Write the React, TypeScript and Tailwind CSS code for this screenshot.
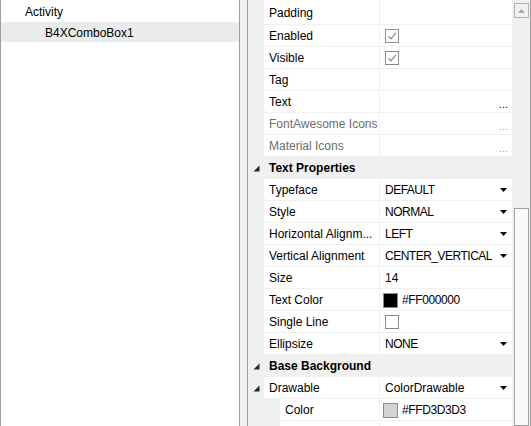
import React from "react";

type Row = {
  name: string;
  cat?: boolean;
  expander?: boolean;
  indent?: boolean;
  disabled?: boolean;
  value?: string;
  control?: "check" | "uncheck" | "dots" | "drop" | "color";
  swatch?: string;
  caps?: boolean;
  first?: boolean;
};

const rows: Row[] = [
  { name: "Padding", first: true },
  { name: "Enabled", control: "check" },
  { name: "Visible", control: "check" },
  { name: "Tag" },
  { name: "Text", control: "dots" },
  { name: "FontAwesome Icons", control: "dots", disabled: true },
  { name: "Material Icons", control: "dots", disabled: true },
  { name: "Text Properties", cat: true },
  { name: "Typeface", value: "DEFAULT", control: "drop", caps: true },
  { name: "Style", value: "NORMAL", control: "drop", caps: true },
  { name: "Horizontal Alignm...", value: "LEFT", control: "drop", caps: true },
  { name: "Vertical Alignment", value: "CENTER_VERTICAL", control: "drop", caps: true },
  { name: "Size", value: "14" },
  { name: "Text Color", value: "#FF000000", control: "color", swatch: "bg-black" },
  { name: "Single Line", control: "uncheck" },
  { name: "Ellipsize", value: "NONE", control: "drop", caps: true },
  { name: "Base Background", cat: true },
  { name: "Drawable", value: "ColorDrawable", control: "drop", expander: true },
  { name: "Color", value: "#FFD3D3D3", control: "color", swatch: "bg-[#d3d3d3]", indent: true },
  { name: "", indent: true },
];

function Expander() {
  return (
    <svg width="7" height="7" viewBox="0 0 7 7" className="ml-[5px]">
      <polygon points="6.5,0.5 6.5,6.5 0.5,6.5" fill="#262626" />
    </svg>
  );
}

function DropArrow() {
  return (
    <svg width="7" height="4" viewBox="0 0 7 4">
      <polygon points="0,0 7,0 3.5,4" fill="#000" />
    </svg>
  );
}

function CheckBox({ checked }: { checked: boolean }) {
  return (
    <div className="w-[14px] h-[14px] border border-[#8c8c8c] bg-white flex items-center justify-center">
      {checked && (
        <svg width="10" height="10" viewBox="0 0 10 10">
          <path d="M1.5 5.2 L4 7.8 L8.8 1.8" stroke="#8c8c8c" strokeWidth="1.3" fill="none" />
        </svg>
      )}
    </div>
  );
}

function PropRow({ r }: { r: Row }) {
  const h = r.first ? "h-[25px]" : "h-[22px]";
  if (r.cat) {
    return (
      <div className={`flex items-center ${h} bg-[#f0f0f0] border-b border-[#f0f0f0] pt-[1px]`}>
        <div className="w-[16px] flex items-center">
          <Expander />
        </div>
        <span className="pl-[5px] font-bold">{r.name}</span>
      </div>
    );
  }
  return (
    <div className={`flex ${h} border-b border-[#f0f0f0]`}>
      <div className={`${r.indent ? "w-[32px]" : "w-[16px]"} bg-[#f0f0f0] flex items-center shrink-0 pt-[1px]`}>
        {r.expander && <Expander />}
      </div>
      <div
        className={`${r.indent ? "w-[100px]" : "w-[116px]"} shrink-0 bg-white border-r border-[#f0f0f0] flex items-center pl-[5px] pt-[1px] whitespace-nowrap overflow-hidden ${
          r.disabled ? "text-[#6d6d6d]" : "text-black"
        }`}
      >
        {r.name}
      </div>
      <div className="w-[132px] shrink-0 bg-white flex items-center justify-between pr-[5px] pt-[1px]">
        <div className="flex items-center">
          {r.control === "color" ? (
            <>
              <div className={`ml-[3px] w-[15px] h-[15px] border border-[#8c8c8c] ${r.swatch}`} />
              <span className="ml-[4px] tracking-[-0.4px]">{r.value}</span>
            </>
          ) : r.control === "check" ? (
            <div className="ml-[5px]">
              <CheckBox checked />
            </div>
          ) : r.control === "uncheck" ? (
            <div className="ml-[5px]">
              <CheckBox checked={false} />
            </div>
          ) : (
            <span className={`ml-[5px] ${r.caps ? "tracking-[-0.5px]" : ""}`}>{r.value}</span>
          )}
        </div>
        {r.control === "drop" && <DropArrow />}
        {r.control === "dots" && (
          <span className={`text-[11px] leading-none pt-[4px] mr-[-1px] ${r.disabled ? "text-[#a8a8a8]" : "text-black"}`}>
            ...
          </span>
        )}
      </div>
    </div>
  );
}

export default function App() {
  return (
    <div className="flex w-[531px] h-[426px] overflow-hidden bg-[#f0f0f0] text-[12px] text-black font-['Liberation_Sans',sans-serif]">
      <div className="w-[240px] shrink-0 bg-white border-l border-r border-[#a0a0a0]">
        <div className="h-[22px] flex items-center pl-[24px] pt-[1px]">Activity</div>
        <div className="h-[20px] flex items-center pl-[44px] pt-[1px] bg-[#ebebeb]">B4XComboBox1</div>
      </div>
      <div className="w-[7px] shrink-0" />
      <div className="flex-1 flex border-l border-r border-[#a0a0a0] min-w-0">
        <div className="w-[264px] shrink-0">
          {rows.map((r, i) => (
            <PropRow key={i} r={r} />
          ))}
        </div>
        <div className="flex-1 flex flex-col items-center pt-[3px]">
          <div className="w-[15px] h-[15px] border border-[#b4b4b4] flex items-center justify-center">
            <svg width="7" height="4" viewBox="0 0 7 4">
              <polygon points="0,4 7,4 3.5,0" fill="#a8a8a8" />
            </svg>
          </div>
          <div className="h-[190px]" />
          <div className="w-[15px] flex-1 border border-[#a0a0a0] bg-[#fafafa]" />
        </div>
      </div>
    </div>
  );
}
